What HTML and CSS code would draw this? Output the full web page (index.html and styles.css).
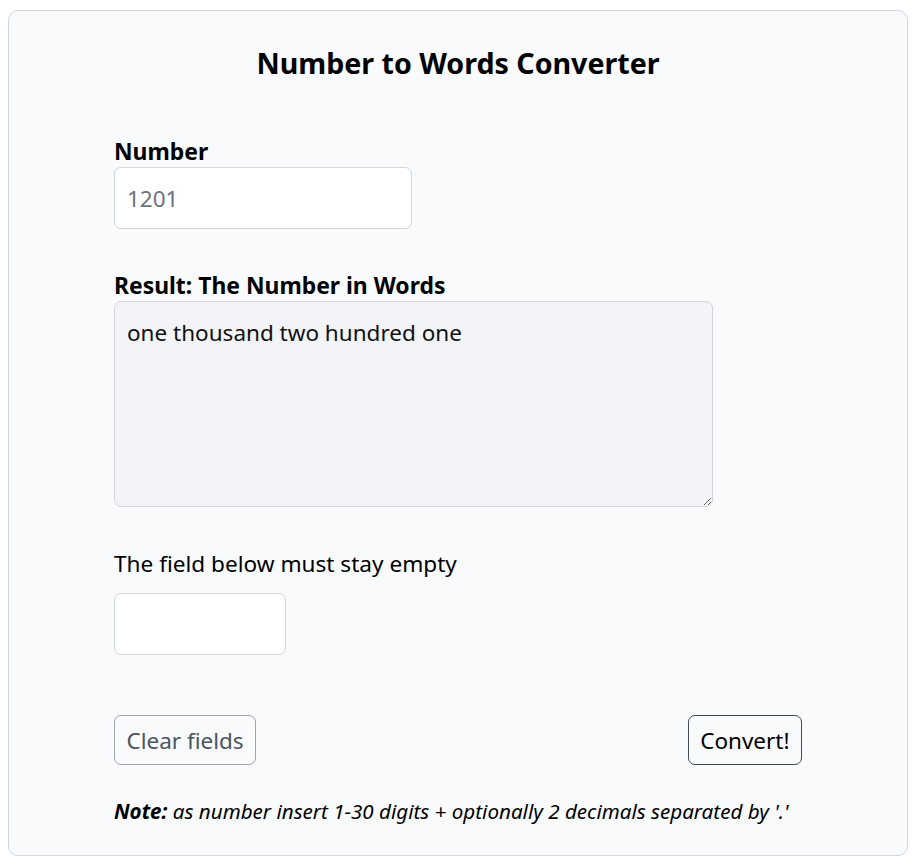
FILE: index.html
```html
<!DOCTYPE html>
<html lang="en">
<head>
<meta charset="utf-8">
<title>Number to Words Converter</title>
<link rel="stylesheet" href="styles.css">
</head>
<body>
<div class="card">
  <h1 class="title">Number to Words Converter</h1>
  <form class="form">
    <div class="field">
      <label class="label bold" for="num">Number</label>
      <input class="input input-number" id="num" type="text" placeholder="1201">
    </div>
    <div class="field">
      <label class="label bold" for="res">Result: The Number in Words</label>
      <textarea class="input result" id="res" readonly>one thousand two hundred one</textarea>
    </div>
    <div class="field field-honey">
      <label class="label" for="hp">The field below must stay empty</label>
      <input class="input input-honey" id="hp" type="text">
    </div>
    <div class="actions">
      <button type="button" class="btn btn-clear">Clear fields</button>
      <button type="button" class="btn btn-convert">Convert!</button>
    </div>
    <p class="note"><b>Note:</b> as number insert 1-30 digits + optionally 2 decimals separated by '.'</p>
  </form>
</div>
</body>
</html>
```
FILE: styles.css
```css
* { box-sizing: border-box; }
body {
  margin: 10px 10px 8px 8px;
  font-family: "Noto Sans", "Open Sans", sans-serif;
  color: #000;
  background: #fff;
}
.card {
  width: 900px;
  height: 846px;
  border: 1px solid #d1d5db;
  border-radius: 10px;
  background: #f9fafb;
  padding: 34px 105px 0;
}
.title {
  margin: 0;
  text-align: center;
  font-size: 28.6px;
  line-height: 36px;
  font-weight: 700;
}
.form {
  display: flex;
  flex-direction: column;
  margin-top: 56px;
}
.field {
  display: flex;
  flex-direction: column;
  align-items: flex-start;
  margin-bottom: 42px;
}
.label {
  font-size: 22.6px;
  line-height: 30px;
}
.bold { font-weight: 700; font-size: 22.9px; }
.input {
  font-family: inherit;
  font-size: 22.5px;
  color: #111;
  border: 1px solid #d1d5db;
  border-radius: 7px;
  background: #fff;
  padding: 12px;
  outline: none;
}
.input::placeholder { color: #6b7280; }
.input-number { width: 298px; height: 62px; }
.result {
  width: 599px;
  height: 206px;
  background: #f2f4f7;
  resize: vertical;
  line-height: 30px;
  padding: 16px 12px;
}
.field-honey .label { margin-bottom: 14px; }
.input-honey { width: 172px; height: 62px; }
.field-honey { margin-bottom: 60px; }
.actions {
  display: flex;
  justify-content: space-between;
}
.btn {
  font-family: inherit;
  font-size: 22.5px;
  height: 50px;
  padding: 0 11.5px;
  border-radius: 7px;
  background: #f9fafb;
  cursor: pointer;
}
.btn-clear {
  border: 1px solid #9ca3af;
  color: #4b5563;
}
.btn-convert {
  border: 1px solid #3f4a5a;
  color: #000;
}
.note {
  margin: 32px 0 0;
  font-size: 20.6px;
  line-height: 28px;
  font-style: italic;
}
```
